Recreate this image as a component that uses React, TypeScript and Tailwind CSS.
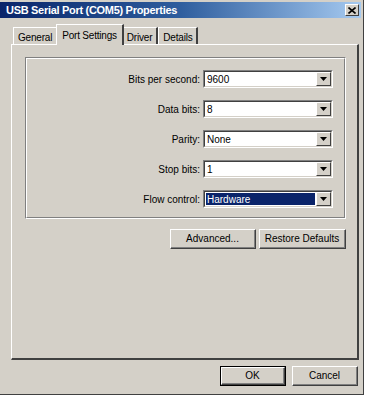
import * as React from "react"

const font = { fontFamily: '"Liberation Sans", Arial, sans-serif' }

function Tab({ label, active }: { label: string; active?: boolean }) {
  if (active) {
    return (
      <div className="relative z-10 -mx-[2px] -mb-[1px] h-[21px] px-[5px] pt-[3px] bg-[#d4d0c8] border-t border-l border-white border-r-2 border-r-[#404040] text-[10px] tracking-[-0.2px] text-black">
        {label}
      </div>
    )
  }
  return (
    <div className="h-[17px] px-[4px] pt-[2px] bg-[#d4d0c8] border-t border-l border-white border-r-2 border-r-[#404040] text-[10px] tracking-[-0.2px] text-black">
      {label}
    </div>
  )
}

function Combo({ value, selected }: { value: string; selected?: boolean }) {
  return (
    <div className="flex h-[18px] w-[130px] border border-t-[#808080] border-l-[#808080] border-b-white border-r-white">
      <div className="flex flex-1 border border-t-[#404040] border-l-[#404040] border-b-[#d4d0c8] border-r-[#d4d0c8] bg-white">
        <div className="flex flex-1 items-center p-[1px]">
          <span
            className={
              selected
                ? "flex-1 h-full flex items-center pl-[1px] bg-[#0a246a] text-white text-[10px]"
                : "flex-1 h-full flex items-center pl-[1px] text-black text-[10px]"
            }
          >
            {value}
          </span>
        </div>
        <div className="w-[15px] flex items-center justify-center bg-[#d4d0c8] border border-t-white border-l-white border-b-[#404040] border-r-[#404040]">
          <svg width="7" height="4" viewBox="0 0 7 4">
            <path d="M0 0H7L3.5 4Z" fill="#000" />
          </svg>
        </div>
      </div>
    </div>
  )
}

function Row({ label, value, selected }: { label: string; value: string; selected?: boolean }) {
  return (
    <div className="flex items-center">
      <span className="flex-1 text-right pr-[3px] text-[10px] text-black">{label}</span>
      <Combo value={value} selected={selected} />
    </div>
  )
}

function Button({ label, isDefault, width }: { label: string; isDefault?: boolean; width: string }) {
  return (
    <div className={`${width} shrink-0 h-[20px] ${isDefault ? "border border-black" : ""}`}>
      <div className="h-full border border-t-white border-l-white border-b-[#404040] border-r-[#404040]">
        <div className="h-full flex items-center justify-center border-b border-r border-[#808080] text-[10px] text-black">
          {label}
        </div>
      </div>
    </div>
  )
}

export default function App() {
  return (
    <div className="w-[367px] h-[400px] bg-white" style={font}>
      <div className="w-[364px] h-[395px] bg-[#d4d0c8] border-r border-b border-[#404040] pt-[2px] pr-[1px] flex flex-col">
        <div className="h-[16px] mr-[1px] flex items-center justify-between pl-[6px] pr-[2px] bg-gradient-to-r from-[#0a246a] via-[#2f5e9e] to-[#a6caf0]">
          <span className="text-white text-[11px] font-bold tracking-[-0.3px]">USB Serial Port (COM5) Properties</span>
          <div className="w-[14px] h-[12px] flex items-center justify-center bg-[#d4d0c8] border border-t-white border-l-white border-b-[#404040] border-r-[#404040]">
            <svg width="8" height="7" viewBox="0 0 8 7">
              <path d="M0.5 0.5L7.5 6.5M7.5 0.5L0.5 6.5" stroke="#000" strokeWidth="1.6" />
            </svg>
          </div>
        </div>

        <div className="flex items-end pl-[13px] mt-[6px] h-[20px]">
          <Tab label="General" />
          <Tab label="Port Settings" active />
          <Tab label="Driver" />
          <Tab label="Details" />
        </div>

        <div className="ml-[11px] mr-[3px] h-[316px] border-t border-l border-white border-r-2 border-b-2 border-r-[#404040] border-b-[#404040] pt-[12px] pl-[13px] pr-[11px] flex flex-col">
          <div className="h-[162px] border border-t-[#808080] border-l-[#808080] border-b-white border-r-white">
            <div className="h-full border border-t-white border-l-white border-b-[#808080] border-r-[#808080] pt-[11px] pr-[11px] flex flex-col gap-[12px]">
              <Row label="Bits per second:" value="9600" />
              <Row label="Data bits:" value="8" />
              <Row label="Parity:" value="None" />
              <Row label="Stop bits:" value="1" />
              <Row label="Flow control:" value="Hardware" selected />
            </div>
          </div>
          <div className="flex justify-end gap-[3px] mt-[10px]">
            <Button label="Advanced..." width="w-[86px]" />
            <Button label="Restore Defaults" width="w-[87px]" />
          </div>
        </div>

        <div className="flex justify-end gap-[6px] mt-[6px] mr-[4px]">
          <Button label="OK" isDefault width="w-[66px]" />
          <Button label="Cancel" width="w-[66px]" />
        </div>
      </div>
    </div>
  )
}
